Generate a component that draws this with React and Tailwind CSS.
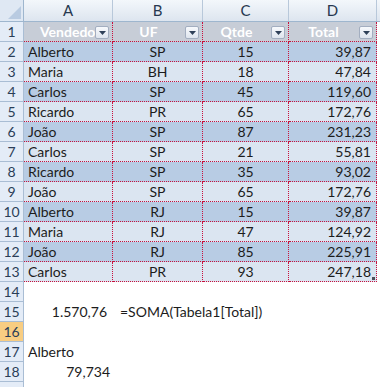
const rows = [
  ["Alberto", "SP", "15", "39,87"],
  ["Maria", "BH", "18", "47,84"],
  ["Carlos", "SP", "45", "119,60"],
  ["Ricardo", "PR", "65", "172,76"],
  ["João", "SP", "87", "231,23"],
  ["Carlos", "SP", "21", "55,81"],
  ["Ricardo", "SP", "35", "93,02"],
  ["João", "SP", "65", "172,76"],
  ["Alberto", "RJ", "15", "39,87"],
  ["Maria", "RJ", "47", "124,92"],
  ["João", "RJ", "85", "225,91"],
  ["Carlos", "PR", "93", "247,18"],
];

const cols = "grid grid-cols-[24px_89px_90px_86px_88px_1fr]";
const dotted = "border-r border-b border-dotted border-[#c8103c]";

const RowNum = ({ n, active }) => (
  <div
    className={`h-[20px] flex items-center justify-center border-r border-b border-[#a9bdd4] text-[#2b3e57] ${
      active ? "bg-[#f8cd82]" : "bg-[#e4ecf7]"
    }`}
  >
    {n}
  </div>
);

const Filter = () => (
  <span className="absolute right-[3px] top-[4px] w-[14px] h-[13px] rounded-[2px] border border-[#a3aec0] bg-gradient-to-b from-[#f7f9fc] to-[#dfe5ee] flex items-center justify-center">
    <svg width="7" height="4" viewBox="0 0 7 4">
      <path d="M0 0h7L3.5 4z" fill="#2f4058" />
    </svg>
  </span>
);

const HeadCell = ({ label }) => (
  <div className={`relative h-[20px] bg-[#c7cdd7] ${dotted} overflow-hidden`}>
    <div className="pr-[18px] h-full flex items-center justify-center font-bold text-white whitespace-nowrap overflow-hidden">
      {label}
    </div>
    <Filter />
  </div>
);

export default function App() {
  return (
    <div
      className="w-[380px] h-[387px] overflow-hidden bg-white text-[14px] leading-none text-[#1c1c1c]"
      style={{ fontFamily: "Lato, 'Liberation Sans', sans-serif" }}
    >
      <div className={`${cols} h-[22px] text-[#27384f] text-[15px] border-b border-[#9eb6ce]`}>
        <div className="relative bg-[#dfe8f3] border-r border-[#9eb6ce]">
          <svg className="absolute right-[2px] bottom-[2px]" width="13" height="13" viewBox="0 0 13 13">
            <path d="M13 0V13H0z" fill="#b9cbe1" />
          </svg>
        </div>
        {["A", "B", "C", "D"].map((c) => (
          <div
            key={c}
            className="flex items-center justify-center bg-gradient-to-b from-[#f3f7fb] to-[#dde5ef] border-r border-[#b8c8da]"
          >
            {c}
          </div>
        ))}
        <div className="bg-gradient-to-b from-[#f3f7fb] to-[#dde5ef]" />
      </div>

      <div className={cols}>
        <RowNum n={1} />
        <div className={`relative h-[20px] bg-[#c7cdd7] ${dotted} overflow-hidden`}>
          <div className="absolute left-[16px] top-0 h-full flex items-center font-bold text-white whitespace-nowrap">
            Vendedor
          </div>
          <Filter />
        </div>
        <HeadCell label="UF" />
        <HeadCell label="Qtde" />
        <HeadCell label="Total" />
        <div />

        {rows.map((r, i) => {
          const bg = i % 2 === 0 ? "bg-[#b8cce4]" : "bg-[#dbe5f1]";
          const last = i === rows.length - 1;
          return [
            <RowNum key={`n${i}`} n={i + 2} />,
            <div key={`a${i}`} className={`h-[20px] ${bg} ${dotted} flex items-center pl-[4px]`}>
              {r[0]}
            </div>,
            <div key={`b${i}`} className={`h-[20px] ${bg} ${dotted} flex items-center justify-center`}>
              {r[1]}
            </div>,
            <div key={`c${i}`} className={`h-[20px] ${bg} ${dotted} flex items-center justify-center`}>
              {r[2]}
            </div>,
            <div key={`d${i}`} className={`relative h-[20px] ${bg} ${dotted} flex items-center justify-end pr-[5px]`}>
              {r[3]}
              {last && <span className="absolute right-[1px] bottom-[1px] w-[3px] h-[3px] bg-[#4a4f5a]" />}
            </div>,
            <div key={`e${i}`} />,
          ];
        })}

        <RowNum n={14} />
        <div className="col-span-5" />

        <RowNum n={15} />
        <div className="h-[20px] flex items-center justify-end pr-[6px]">1.570,76</div>
        <div className="h-[20px] col-span-4 flex items-center pl-[7px] whitespace-nowrap">
          =SOMA(Tabela1[Total])
        </div>

        <RowNum n={16} active />
        <div className="col-span-5" />

        <RowNum n={17} />
        <div className="h-[20px] flex items-center pl-[4px]">Alberto</div>
        <div className="col-span-4" />

        <RowNum n={18} />
        <div className="h-[20px] flex items-center justify-end pr-[3px]">79,734</div>
        <div className="col-span-4" />

        <RowNum n="" />
        <div className="col-span-5" />
      </div>
    </div>
  );
}
